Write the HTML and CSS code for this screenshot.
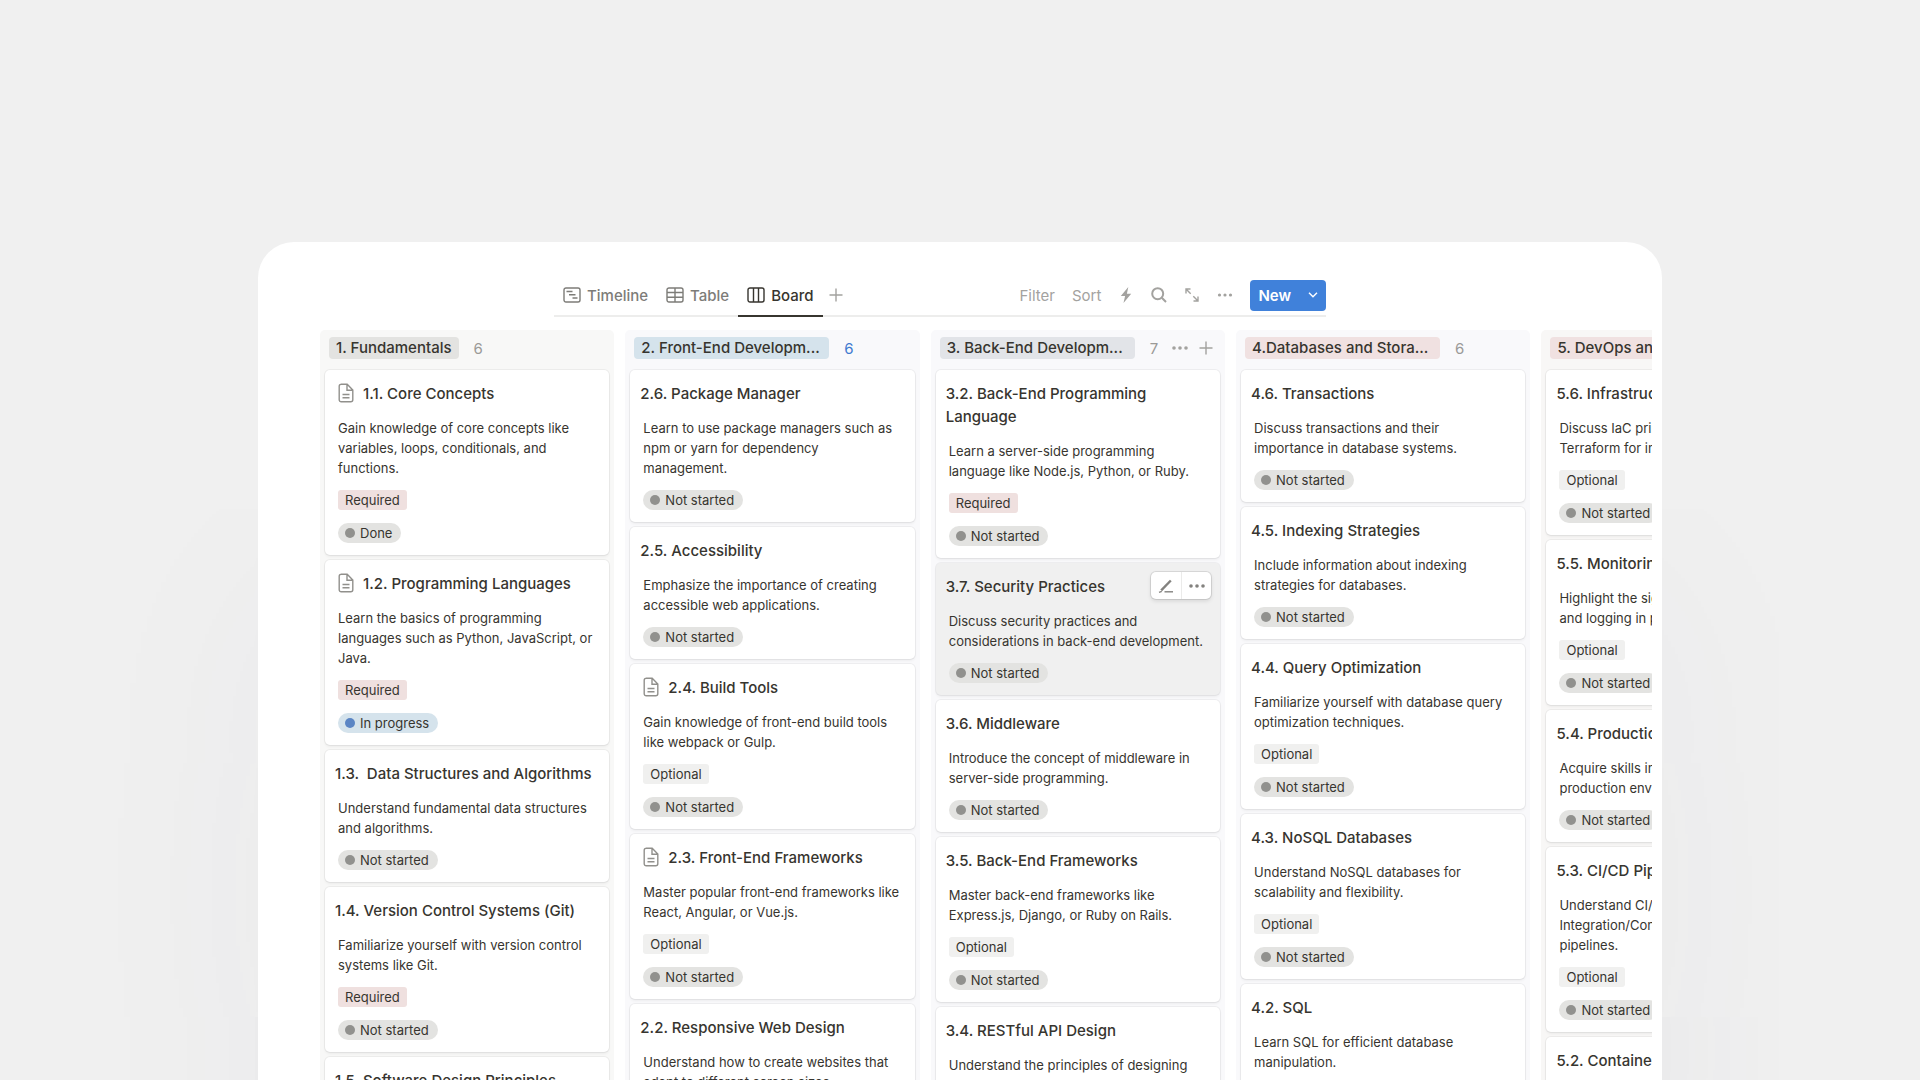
FILE: index.html
```html
<!DOCTYPE html>
<html lang="en">
<head>
<meta charset="utf-8">
<title>Roadmap Board</title>
<link rel="stylesheet" href="styles.css">
</head>
<body>
<svg class="sprite" width="0" height="0" aria-hidden="true">
  <symbol id="page" viewBox="0 0 16 20">
    <path d="M3 1.2h6.2L14.8 7v9.8a2 2 0 0 1-2 2H3.200a2 2 0 0 1-2-2V3.200a2 2 0 0 1 2-2z M9 1.500V7.200h5.500 M4.500 11.500h7 M4.500 14.800h7"/>
  </symbol>
</svg>
<main class="panel">
  <div class="toolbar">
    <nav class="tabs">
      <a class="tab" href="#timeline">
        <svg width="18" height="16" viewBox="0 0 18 16"><rect x="1" y="1" width="16" height="14" rx="2"/><path d="M3.500 4.500h6M6 7.700h6.500M9.500 11h5"/></svg>
        Timeline
      </a>
      <a class="tab" href="#table">
        <svg width="18" height="16" viewBox="0 0 18 16"><rect x="1" y="1" width="16" height="14" rx="2"/><path d="M1 5.500h16M1 10.200h16M9 1v14"/></svg>
        Table
      </a>
      <a class="tab active" href="#board">
        <svg width="18" height="16" viewBox="0 0 18 16"><rect x="1" y="1" width="16" height="14" rx="2"/><path d="M6.500 1v14M11.500 1v14"/></svg>
        Board
      </a>
      <button class="icon-btn add-view" aria-label="Add view"><svg width="14" height="14" viewBox="0 0 14 14"><path d="M7 .5v13M.5 7h13"/></svg></button>
    </nav>
    <div class="actions">
      <button class="text-btn">Filter</button>
      <button class="text-btn">Sort</button>
      <button class="icon-btn" aria-label="Automations"><svg class="solid" width="16" height="16" viewBox="0 0 16 16"><path d="M10.300 0 2.800 9h4.300L5.500 16 13.200 6.700H8.900z"/></svg></button>
      <button class="icon-btn" aria-label="Search"><svg class="thick" width="16" height="16" viewBox="0 0 16 16"><circle cx="6.700" cy="6.700" r="5.500"/><path d="m10.800 10.800 4.200 4.200"/></svg></button>
      <button class="icon-btn" aria-label="Expand"><svg width="16" height="16" viewBox="0 0 16 16"><path d="M2 6.500V2h4.500M2 2l4.700 4.700M14 9.500V14H9.500M14 14 9.300 9.300"/></svg></button>
      <button class="icon-btn" aria-label="More"><svg class="solid" width="16" height="4" viewBox="0 0 16 4"><circle cx="2.500" cy="2" r="1.600"/><circle cx="8" cy="2" r="1.600"/><circle cx="13.500" cy="2" r="1.600"/></svg></button>
      <button class="new-btn">New <svg width="10" height="6" viewBox="0 0 10 6"><path d="m1 .8 4 4 4-4"/></svg></button>
    </div>
  </div>

  <div class="board">
    <section class="column gray">
      <header><h2>1. Fundamentals</h2><span class="count">6</span></header>
      <article class="card">
        <h3><svg><use href="#page"/></svg>1.1. Core Concepts</h3>
        <p>Gain knowledge of core concepts like variables, loops, conditionals, and functions.</p>
        <div class="tags"><span class="tag required">Required</span><span class="status">Done</span></div>
      </article>
      <article class="card">
        <h3><svg><use href="#page"/></svg>1.2. Programming Languages</h3>
        <p>Learn the basics of programming languages such as Python, JavaScript, or Java.</p>
        <div class="tags"><span class="tag required">Required</span><span class="status progress">In progress</span></div>
      </article>
      <article class="card">
        <h3>1.3. &nbsp;Data Structures and Algorithms</h3>
        <p>Understand fundamental data structures and algorithms.</p>
        <div class="tags"><span class="status">Not started</span></div>
      </article>
      <article class="card">
        <h3>1.4. Version Control Systems (Git)</h3>
        <p>Familiarize yourself with version control systems like Git.</p>
        <div class="tags"><span class="tag required">Required</span><span class="status">Not started</span></div>
      </article>
      <article class="card">
        <h3>1.5. Software Design Principles</h3>
      </article>
    </section>

    <section class="column blue">
      <header><h2 class="cut">2. Front-End Developm...</h2><span class="count">6</span></header>
      <article class="card">
        <h3>2.6. Package Manager</h3>
        <p>Learn to use package managers such as npm or yarn for dependency management.</p>
        <div class="tags"><span class="status">Not started</span></div>
      </article>
      <article class="card">
        <h3>2.5. Accessibility</h3>
        <p>Emphasize the importance of creating accessible web applications.</p>
        <div class="tags"><span class="status">Not started</span></div>
      </article>
      <article class="card">
        <h3><svg><use href="#page"/></svg>2.4. Build Tools</h3>
        <p>Gain knowledge of front-end build tools like webpack or Gulp.</p>
        <div class="tags"><span class="tag">Optional</span><span class="status">Not started</span></div>
      </article>
      <article class="card">
        <h3><svg><use href="#page"/></svg>2.3. Front-End Frameworks</h3>
        <p>Master popular front-end frameworks like React, Angular, or Vue.js.</p>
        <div class="tags"><span class="tag">Optional</span><span class="status">Not started</span></div>
      </article>
      <article class="card">
        <h3>2.2. Responsive Web Design</h3>
        <p>Understand how to create websites that adapt to different screen sizes.</p>
      </article>
    </section>

    <section class="column slate">
      <header>
        <h2 class="cut">3. Back-End Developm...</h2><span class="count">7</span>
        <button class="icon-btn" aria-label="Column options"><svg class="solid" width="16" height="4" viewBox="0 0 16 4"><circle cx="2" cy="2" r="1.800"/><circle cx="8" cy="2" r="1.800"/><circle cx="14" cy="2" r="1.800"/></svg></button>
        <button class="icon-btn" aria-label="Add card"><svg width="14" height="14" viewBox="0 0 14 14"><path d="M7 .5v13M.5 7h13"/></svg></button>
      </header>
      <article class="card">
        <h3>3.2. Back-End Programming Language</h3>
        <p>Learn a server-side programming language like Node.js, Python, or Ruby.</p>
        <div class="tags"><span class="tag required">Required</span><span class="status">Not started</span></div>
      </article>
      <article class="card hovered">
        <div class="card-actions">
          <button aria-label="Edit"><svg width="16" height="14" viewBox="0 0 16 14"><path d="M6.500 12.800H15"/><path class="pencil" d="M12.800 1.500 3.200 11.300"/><path d="m1 13.300 2.800-1"/></svg></button>
          <button aria-label="Card options"><svg class="solid" width="16" height="4" viewBox="0 0 16 4"><circle cx="2" cy="2" r="1.800"/><circle cx="8" cy="2" r="1.800"/><circle cx="14" cy="2" r="1.800"/></svg></button>
        </div>
        <h3>3.7. Security Practices</h3>
        <p>Discuss security practices and considerations in back-end development.</p>
        <div class="tags"><span class="status">Not started</span></div>
      </article>
      <article class="card">
        <h3>3.6. Middleware</h3>
        <p>Introduce the concept of middleware in server-side programming.</p>
        <div class="tags"><span class="status">Not started</span></div>
      </article>
      <article class="card">
        <h3>3.5. Back-End Frameworks</h3>
        <p>Master back-end frameworks like Express.js, Django, or Ruby on Rails.</p>
        <div class="tags"><span class="tag">Optional</span><span class="status">Not started</span></div>
      </article>
      <article class="card">
        <h3>3.4. RESTful API Design</h3>
        <p>Understand the principles of designing</p>
      </article>
    </section>

    <section class="column red">
      <header><h2 class="cut">4.Databases and Stora...</h2><span class="count">6</span></header>
      <article class="card">
        <h3>4.6. Transactions</h3>
        <p>Discuss transactions and their importance in database systems.</p>
        <div class="tags"><span class="status">Not started</span></div>
      </article>
      <article class="card">
        <h3>4.5. Indexing Strategies</h3>
        <p>Include information about indexing strategies for databases.</p>
        <div class="tags"><span class="status">Not started</span></div>
      </article>
      <article class="card">
        <h3>4.4. Query Optimization</h3>
        <p>Familiarize yourself with database query optimization techniques.</p>
        <div class="tags"><span class="tag">Optional</span><span class="status">Not started</span></div>
      </article>
      <article class="card">
        <h3>4.3. NoSQL Databases</h3>
        <p>Understand NoSQL databases for scalability and flexibility.</p>
        <div class="tags"><span class="tag">Optional</span><span class="status">Not started</span></div>
      </article>
      <article class="card">
        <h3>4.2. SQL</h3>
        <p>Learn SQL for efficient database manipulation.</p>
      </article>
    </section>

    <section class="column red warm">
      <header><h2 class="cut">5. DevOps and Deplo...</h2></header>
      <article class="card">
        <h3>5.6. Infrastructure as Code</h3>
        <p>Discuss IaC principles and tools like Terraform for infrastructure.</p>
        <div class="tags"><span class="tag">Optional</span><span class="status">Not started</span></div>
      </article>
      <article class="card">
        <h3>5.5. Monitoring and Logging</h3>
        <p>Highlight the significance of monitors<br>and logging in production.</p>
        <div class="tags"><span class="tag">Optional</span><span class="status">Not started</span></div>
      </article>
      <article class="card">
        <h3>5.4. Production Deployment</h3>
        <p>Acquire skills in deploying software to production environments.</p>
        <div class="tags"><span class="status">Not started</span></div>
      </article>
      <article class="card">
        <h3>5.3. CI/CD Pipelines</h3>
        <p>Understand CI/CD (Continuous<br>Integration/Continuous Deployment)<br>pipelines.</p>
        <div class="tags"><span class="tag">Optional</span><span class="status">Not started</span></div>
      </article>
      <article class="card">
        <h3>5.2. Containerization</h3>
      </article>
    </section>
  </div>
</main>
</body>
</html>
```

FILE: styles.css
```css
* {
  box-sizing: border-box;
}
body {
  margin: 0;
  height: 100vh;
  padding: 242px 258px 0;
  overflow: hidden;
  background: #f0f0f0;
  color: #37352f;
  font-family: Inter, "Liberation Sans", sans-serif;
  font-size: 13px;
}
h2, h3, p {
  margin: 0;
}
button {
  padding: 0;
  border: 0;
  background: none;
  color: inherit;
  font: inherit;
  cursor: pointer;
}
svg {
  flex-shrink: 0;
  fill: none;
  stroke: currentColor;
  stroke-width: 1.4;
}
svg.thick {
  stroke-width: 2;
}
svg.solid {
  fill: currentColor;
  stroke: none;
}
.pencil {
  stroke-width: 2.4;
}
.sprite {
  position: absolute;
}
.panel {
  height: 100%;
  padding: 38px 10px 0 62px;
  overflow: hidden;
  background: #fff;
  border-radius: 36px 36px 0 0;
  box-shadow: 0 280px 240px -60px rgba(70, 70, 110, 0.1);
}

/* view tabs and actions */
.toolbar {
  display: flex;
  justify-content: space-between;
  height: 37px;
  margin: 0 326px 13px 234px;
  border-bottom: 2px solid #ededec;
}
.tabs, .actions {
  display: flex;
  align-items: flex-start;
}
.tab {
  display: flex;
  align-items: center;
  gap: 6px;
  height: 37px;
  padding: 0 9px 7px;
  color: #7d7c78;
  font-size: 15px;
  font-weight: 500;
  text-decoration: none;
}
.tab.active {
  color: #37352f;
  border-bottom: 2px solid #37352f;
  padding-bottom: 5px;
}
.icon-btn {
  display: flex;
  align-items: center;
  justify-content: center;
  color: #a3a29f;
}
.add-view {
  height: 30px;
  margin-left: 6px;
}
.actions {
  align-items: center;
  height: 30px;
  gap: 17px;
  color: #a3a29f;
  font-size: 15px;
}
.new-btn {
  display: flex;
  align-items: center;
  gap: 17px;
  height: 31px;
  padding: 0 8px;
  border-radius: 4px;
  background: #4081da;
  color: #fff;
  font-weight: 600;
}

/* board */
.board {
  display: flex;
  gap: 11px;
  overflow: hidden;
}
.column {
  display: flex;
  flex: 0 0 22.1%;
  flex-direction: column;
  gap: 5px;
  min-width: 0;
  min-height: 100vh;
  padding: 7px 5px;
  border-radius: 5px;
  background: #f8f8f7;
}
.column header {
  display: flex;
  align-items: center;
  height: 22px;
  margin: 0 4px 6px;
}
.column h2 {
  padding: 0 7px;
  border-radius: 4px;
  background: #e3e3e1;
  font-size: 15px;
  font-weight: 500;
  line-height: 22px;
  white-space: nowrap;
}
.column h2.cut {
  flex: 0 0 195px;
}
.count {
  margin-left: 15px;
  color: #9b9a97;
  font-size: 15px;
}
.column header .icon-btn {
  margin-left: 11px;
}
.column header .count + .icon-btn {
  margin-left: 14px;
}
.blue, .slate, .red {
  background: #f9f9fb;
}
.blue h2 {
  background: #d5e3ec;
}
.blue .count {
  color: #3f7bd0;
}
.slate h2 {
  background: #e2e4e8;
}
.red h2 {
  background: #f0e1e1;
}
.warm {
  background: #f8f7f6;
}

.card {
  position: relative;
  padding: 12px 13px;
  border-radius: 5px;
  background: #fff;
  box-shadow: 0 0 0 1px rgba(15, 15, 15, 0.05), 0 2px 3px rgba(15, 15, 15, 0.05);
}
.card h3 {
  display: flex;
  margin: 0 -3px 13px;
  font-size: 15px;
  font-weight: 500;
  line-height: 23px;
}
.card h3 svg {
  width: 16px;
  height: 20px;
  margin: 1px 9px 0 3px;
  color: #91908c;
}
.card p {
  line-height: 20px;
}
.tags {
  display: flex;
  flex-direction: column;
  align-items: flex-start;
  gap: 13px;
  margin-top: 12px;
}
.tag, .status {
  padding: 0 7px;
  border-radius: 3px;
  background: #f0f0ef;
  line-height: 20px;
  white-space: nowrap;
}
.tag.required {
  background: #efe0df;
}
.status {
  display: flex;
  align-items: center;
  gap: 5px;
  padding: 0 9px 0 7px;
  border-radius: 10px;
  background: #e3e3e1;
}
.status::before {
  content: "";
  width: 10px;
  height: 10px;
  border-radius: 50%;
  background: #91918e;
}
.status.progress {
  background: #d5e3ec;
}
.status.progress::before {
  background: #5b85c4;
}
.hovered {
  background: #f0f0f0;
}
.card-actions {
  position: absolute;
  top: 9px;
  right: 9px;
  display: flex;
  height: 27px;
  border-radius: 5px;
  background: #fff;
  color: #83827f;
  box-shadow: 0 0 0 1px rgba(15, 15, 15, 0.1), 0 2px 4px rgba(15, 15, 15, 0.12);
}
.card-actions button {
  display: flex;
  align-items: center;
  justify-content: center;
  width: 30px;
}
.card-actions button + button {
  border-left: 1px solid #ebebea;
}
```
